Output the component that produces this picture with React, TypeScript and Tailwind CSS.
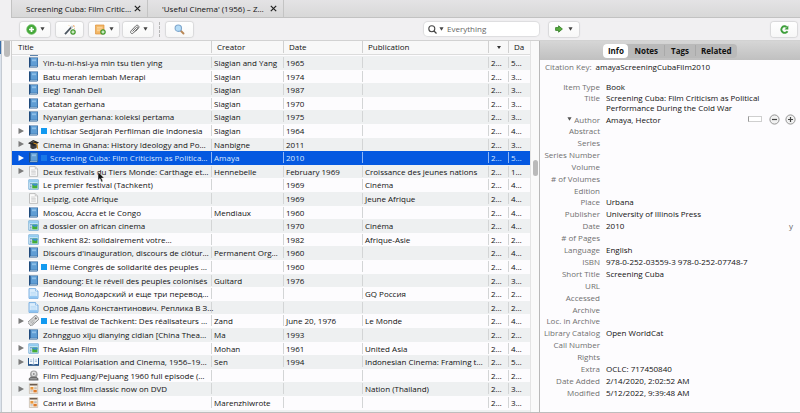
import React from 'react';

type Kind = 'book' | 'cap' | 'doc' | 'mag' | 'page' | 'clip' | 'open' | 'film' | 'news';

interface Item {
  kind: Kind;
  title: string;
  creator?: string;
  date?: string;
  pub?: string;
  a: string;
  b: string;
  parent?: boolean;
  tag?: boolean;
  selected?: boolean;
}

const items: Item[] = [
  { kind: 'book', title: 'Yin-tu-ni-hsi-ya min tsu tien ying', creator: 'Siagian and Yang', date: '1965', a: '2…', b: '5…' },
  { kind: 'book', title: 'Batu merah lembah Merapi', creator: 'Siagian', date: '1974', a: '2…', b: '3…' },
  { kind: 'book', title: 'Elegi Tanah Deli', creator: 'Siagian', date: '1987', a: '2…', b: '3…' },
  { kind: 'book', title: 'Catatan gerhana', creator: 'Siagian', date: '1970', a: '2…', b: '3…' },
  { kind: 'book', title: 'Nyanyian gerhana: koleksi pertama', creator: 'Siagian', date: '1975', a: '2…', b: '3…' },
  { kind: 'book', title: 'Ichtisar Sedjarah Perfilman die Indonesia', creator: 'Siagian', date: '1964', a: '2…', b: '4…', parent: true, tag: true },
  { kind: 'cap', title: 'Cinema in Ghana: History Ideology and Po…', creator: 'Nanbigne', date: '2011', a: '2…', b: '3…', parent: true },
  { kind: 'book', title: 'Screening Cuba: Film Criticism as Politica…', creator: 'Amaya', date: '2010', a: '2…', b: '5…', parent: true, tag: true, selected: true },
  { kind: 'doc', title: 'Deux festivals du Tiers Monde: Carthage et…', creator: 'Hennebelle', date: 'February 1969', pub: 'Croissance des jeunes nations', a: '2…', b: '1…', parent: true },
  { kind: 'mag', title: 'Le premier festival (Tachkent)', date: '1969', pub: 'Cinéma', a: '2…', b: '4…' },
  { kind: 'doc', title: 'Leipzig, coté Afrique', date: '1969', pub: 'Jeune Afrique', a: '2…', b: '4…' },
  { kind: 'book', title: 'Moscou, Accra et le Congo', creator: 'Mendiaux', date: '1960', a: '2…', b: '4…' },
  { kind: 'mag', title: 'a dossier on african cinema', date: '1970', pub: 'Cinéma', a: '2…', b: '4…' },
  { kind: 'mag', title: 'Tachkent 82: solidairement votre…', date: '1982', pub: 'Afrique-Asie', a: '2…', b: '2…' },
  { kind: 'book', title: "Discours d'inauguration, discours de clôtur…", creator: 'Permanent Org…', date: '1960', a: '2…', b: '4…' },
  { kind: 'book', title: 'IIème Congrès de solidarité des peuples …', date: '1960', a: '2…', b: '4…', tag: true },
  { kind: 'book', title: 'Bandoung: Et le réveil des peuples colonisés', creator: 'Guitard', date: '1976', a: '2…', b: '3…' },
  { kind: 'page', title: 'Леонид Володарский и еще три перевод…', pub: 'GQ Россия', a: '2…', b: '2…' },
  { kind: 'page', title: 'Орлов Даль Константинович. Реплика В З…', a: '2…', b: '2…' },
  { kind: 'clip', title: 'Le festival de Tachkent: Des réalisateurs …', creator: 'Zand', date: 'June 20, 1976', pub: 'Le Monde', a: '2…', b: '4…', parent: true, tag: true },
  { kind: 'book', title: 'Zohngguo xiju dianying cidian [China Thea…', creator: 'Ma', date: '1993', a: '2…', b: '2…' },
  { kind: 'mag', title: 'The Asian Film', creator: 'Mohan', date: '1961', pub: 'United Asia', a: '2…', b: '4…', parent: true },
  { kind: 'open', title: 'Political Polarisation and Cinema, 1956–19…', creator: 'Sen', date: '1994', pub: 'Indonesian Cinema: Framing t…', a: '2…', b: '5…', parent: true },
  { kind: 'film', title: 'Film Pedjuang/Pejuang 1960 full episode (…', a: '2…', b: '2…' },
  { kind: 'news', title: 'Long lost film classic now on DVD', pub: 'Nation (Thailand)', a: '2…', b: '3…', parent: true },
  { kind: 'news', title: 'Санти и Вина', creator: 'Marenzhiwrote', a: '2…', b: '3…' },
];

const fields: [string, string?][] = [
  ['Abstract'],
  ['Series'],
  ['Series Number'],
  ['Volume'],
  ['# of Volumes'],
  ['Edition'],
  ['Place', 'Urbana'],
  ['Publisher', 'University of Illinois Press'],
  ['Date', '2010'],
  ['# of Pages'],
  ['Language', 'English'],
  ['ISBN', '978-0-252-03559-3 978-0-252-07748-7'],
  ['Short Title', 'Screening Cuba'],
  ['URL'],
  ['Accessed'],
  ['Archive'],
  ['Loc. in Archive'],
  ['Library Catalog', 'Open WorldCat'],
  ['Call Number'],
  ['Rights'],
  ['Extra', 'OCLC: 717450840'],
  ['Date Added', '2/14/2020, 2:02:52 AM'],
  ['Modified', '5/12/2022, 9:39:48 AM'],
];

function ItemIcon({ kind }: { kind: Kind }) {
  return (
    <svg viewBox="0 0 11 11" className="h-[11px] w-[11px] shrink-0" aria-hidden="true">
      {kind === 'book' && (
        <>
          <path d="M1 .4h9v9.200l-.8 1H1z" fill="#2b5f96" />
          <path d="M2.600 1h6.800v7.800H2.600z" fill="#5f9dd4" />
          <path d="M1 .8l1.200-.4v9l-1.200 1z" fill="#1f4a7c" />
          <path d="M4 2.400h4v1.800H4z" fill="#8fc0e8" />
          <path d="M2.200 9.200h7v.7H2z" fill="#a9c4dc" />
        </>
      )}
      {kind === 'cap' && (
        <>
          <path d="M2.400 5.200v3.600c1.600 1.800 4.600 1.600 6.400-.2V5.400z" fill="#3d3d3d" />
          <path d="M0 4.200L5.200 1 11 3.600 6 7z" fill="#262626" />
          <path d="M1.600 4.300l3.700-2.200 1.600.6z" fill="#666" />
          <path d="M5.400 4l3.800 1.200.4 4.600" fill="none" stroke="#d9921c" strokeWidth="1" />
        </>
      )}
      {kind === 'doc' && (
        <>
          <path d="M1.500.6h5.700l2.400 2.400v7.400H1.500z" fill="#fafafa" stroke="#a9a9a9" strokeWidth=".7" />
          <path d="M7.200.6V3h2.400" fill="#ddd" stroke="#b5b5b5" strokeWidth=".5" />
          <path d="M3.200 4h4M3.200 5.400h4.600M3.200 6.800h4.600M3.200 8.200h4.600" stroke="#c4c4c4" strokeWidth=".7" />
        </>
      )}
      {kind === 'mag' && (
        <>
          <path d="M.8.800h9.500v9.500H.8z" fill="#e2f2fc" stroke="#5f9fce" strokeWidth=".8" />
          <path d="M1.200 1.200h8.700v2.200H1.200z" fill="#8fcaf0" />
          <path d="M2 4.600h2M2 6h1.600M2 7.600h1.600M2 9h1.600" stroke="#4f86b5" strokeWidth=".8" />
          <path d="M4.200 4.400h5.300v5H4.200z" fill="#43ad37" />
          <path d="M4.200 4.400h5.300v1.600l-2.200 1-3.100-1.200z" fill="#3d8fd0" />
        </>
      )}
      {kind === 'page' && (
        <>
          <path d="M1 .6h6.500L10 3v7.400H1z" fill="#dbedfc" stroke="#5f9fdc" strokeWidth=".8" />
          <path d="M7.500.6V3H10" fill="#fff" stroke="#5f9fdc" strokeWidth=".6" />
          <path d="M2.600 4.400h5.200M2.600 5.800h5.800M2.600 7.200h5.800" stroke="#b3d7f5" strokeWidth=".7" />
          <path d="M1.500 8.200h8v1.700h-8z" fill="#86bff0" />
        </>
      )}
      {kind === 'clip' && (
        <g transform="rotate(-42 5.500 5.500)">
          <path d="M0 3h10.800v5.200H0z" fill="#e6e6e6" stroke="#7d7d7d" strokeWidth=".8" />
          <path d="M1.400 4.600h5M1.400 5.800h6M1.400 7h4" stroke="#8d8d8d" strokeWidth=".6" />
          <path d="M7.600 4.400h2v2h-2z" fill="#777" />
        </g>
      )}
      {kind === 'open' && (
        <>
          <path d="M0 2h11v7.800H0z" fill="#1f4f86" />
          <path d="M1 1.600c1.600-.6 3.400-.4 4.500.6v6.400C4.200 7.800 2.600 7.800 1 8.200zM10 1.600c-1.600-.6-3.400-.4-4.500.6v6.400c1.300-.8 2.900-.8 4.500-.4z" fill="#f4f8fc" />
          <path d="M5.500 2.200v6.600M2 4h2.200M2 5.500h2.200M6.800 4H9M6.800 5.500H9" stroke="#7fa5cb" strokeWidth=".6" />
        </>
      )}
      {kind === 'film' && (
        <>
          <circle cx="5.800" cy="4.200" r="3.800" fill="#a3a3a3" />
          <circle cx="5.800" cy="3.800" r="2.300" fill="#e2e2e2" />
          <circle cx="5.800" cy="4" r=".9" fill="#888" />
          <path d="M.8 8.600l2-1.800h5.600l2 1.800v1.800H.8z" fill="#6a6a6a" />
          <path d="M2.200 8.800h6.600" stroke="#c4c4c4" strokeWidth=".7" />
        </>
      )}
      {kind === 'news' && (
        <>
          <path d="M1.400.700h8.300v9.800H1.400z" fill="#fbf2e6" stroke="#b7a795" strokeWidth=".6" />
          <path d="M1.800 1h7.500v1.500H1.800z" fill="#6b5c50" />
          <path d="M2.400 4h3v2.600h-3z" fill="#e8963b" />
          <path d="M6.200 4.300h2.600M6.200 5.500h2.600" stroke="#9b9b9b" strokeWidth=".6" />
          <path d="M5.400 6.800h3.400v2.600H5.400z" fill="#dd7b2c" />
          <path d="M2.400 7.600h2.400M2.400 8.800h2.400" stroke="#a5a5a5" strokeWidth=".6" />
        </>
      )}
    </svg>
  );
}

function Caret({ className = '' }: { className?: string }) {
  return (
    <svg viewBox="0 0 6 4" className={`h-1 w-[5px] shrink-0 ${className}`} aria-hidden="true">
      <path d="M.5 0h5L3 4z" fill="currentColor" />
    </svg>
  );
}

function ToolButton({ label, className = '', children }: { label: string; className?: string; children: React.ReactNode }) {
  return (
    <button
      type="button"
      aria-label={label}
      className={`flex h-[15px] items-center justify-center gap-[3px] rounded-[3px] bg-gradient-to-b from-white to-[#f7f7f7] text-[#444] shadow-[0_0_1px_1px_#d8d8da] ${className}`}
    >
      {children}
    </button>
  );
}

function Plus({ x, y }: { x: number; y: number }) {
  return (
    <g transform={`translate(${x} ${y})`}>
      <circle r="2.500" fill="#4faa35" stroke="#2e7d1e" strokeWidth=".5" />
      <path d="M-1.500 0h3M0-1.500v3" stroke="#fff" strokeWidth=".9" />
    </g>
  );
}

function Tab({ children }: { children: string }) {
  return (
    <div className="flex w-[136px] items-center justify-between border-r border-[#c4c4c4] pr-[6px] pl-[14px]">
      <span className="whitespace-nowrap">{children}</span>
      <button type="button" aria-label="Close tab">
        <svg viewBox="0 0 7 7" className="h-[7px] w-[7px]">
          <path d="M.8.800l5.400 5.400M6.200.800L.8 6.200" stroke="#222" strokeWidth="1.200" />
        </svg>
      </button>
    </div>
  );
}

function Cell({ children, selected }: { children?: React.ReactNode; selected?: boolean }) {
  return (
    <td className="p-0">
      <div className={`h-[11px] border-l pl-[2px] leading-[11px] whitespace-nowrap ${selected ? 'border-[#8fb6f5]' : 'border-[#d3d5d6]'}`}>
        {children}
      </div>
    </td>
  );
}

function HeadCell({ children }: { children: string }) {
  return (
    <th className="p-0 text-left font-medium">
      <button type="button" className="block h-[12px] w-full border-l border-[#d0d0d0] pl-[5px] text-left leading-[12px]">
        {children}
      </button>
    </th>
  );
}

function ItemTable() {
  return (
    <table className="w-full table-fixed border-collapse font-medium text-[#111]">
      <colgroup>
        <col />
        <col className="w-[72px]" />
        <col className="w-[79px]" />
        <col className="w-[126px]" />
        <col className="w-[20px]" />
        <col className="w-[22px]" />
      </colgroup>
      <thead>
        <tr className="h-[13px] bg-[#f8f8f8]">
          <th className="p-0 text-left font-medium">
            <button type="button" className="block pl-[6px] leading-[12px]">Title</button>
          </th>
          <HeadCell>Creator</HeadCell>
          <HeadCell>Date</HeadCell>
          <HeadCell>Publication</HeadCell>
          <th className="p-0">
            <button type="button" aria-label="Sort by attachments" className="flex h-[12px] w-full items-center justify-center border-l border-[#d0d0d0]">
              <svg viewBox="0 0 4 3" className="h-[3px] w-1"><path d="M0 0h4L2 3z" fill="#333" /></svg>
            </button>
          </th>
          <HeadCell>Da</HeadCell>
        </tr>
      </thead>
      <tbody className="[&>tr:nth-child(5n)]:h-[13px] [&>tr:nth-child(5n+3)]:h-[13px]">
        <tr aria-hidden="true">
          <td colSpan={6} className="border-t border-[#dcdcdc] bg-[#fdfcfe] p-0">
            <div className="ml-[18px] h-px w-[8px] bg-[#5d83ad]" />
          </td>
        </tr>
        {items.map((it, i) => (
          <tr
            key={it.title}
            aria-selected={!!it.selected}
            className={`h-[14px] ${it.selected ? 'bg-[#0458e0] text-[#dbe8ff]' : i % 2 ? 'bg-[#fdfcfe]' : 'bg-[#eef0f1]'}`}
          >
            <td className="p-0">
              <div className="flex h-[11px] items-center pl-[6px] leading-[11px] whitespace-nowrap">
                <span className="w-[10px] shrink-0">
                  {it.parent && (
                    <svg viewBox="0 0 6 6" className="h-[6px] w-[6px]" aria-hidden="true">
                      <path d="M.5 0v6L6 3z" fill={it.selected ? '#fff' : '#7b7b7b'} />
                    </svg>
                  )}
                </span>
                <ItemIcon kind={it.kind} />
                {it.tag && <span className={`ml-[2px] h-[6px] w-[6px] shrink-0 ${it.selected ? 'bg-[#1878e8]' : 'bg-[#139af0]'}`} />}
                <span className={it.tag ? 'ml-[3px]' : 'ml-1'}>{it.title}</span>
              </div>
            </td>
            <Cell selected={it.selected}>{it.creator}</Cell>
            <Cell selected={it.selected}>{it.date}</Cell>
            <Cell selected={it.selected}>{it.pub}</Cell>
            <Cell selected={it.selected}>{it.a}</Cell>
            <Cell selected={it.selected}>{it.b}</Cell>
          </tr>
        ))}
        <tr aria-hidden="true">
          <td colSpan={6} className="bg-[#eef0f1] p-0">
            <div className="ml-[18px] h-[3px] w-[8px] bg-[#c9645c]" />
          </td>
        </tr>
      </tbody>
    </table>
  );
}

function Field({ label, children }: { label: string; children?: React.ReactNode }) {
  return (
    <div className="flex h-[12px]">
      <dt className="w-[60px] shrink-0 text-right whitespace-nowrap text-[#707070]">{label}</dt>
      <dd className="ml-[6px] flex-1 font-medium">{children}</dd>
    </div>
  );
}

function RoundButton({ label, d }: { label: string; d: string }) {
  return (
    <button type="button" aria-label={label}>
      <svg viewBox="0 0 11 11" className="h-[11px] w-[11px]">
        <circle cx="5.500" cy="5.500" r="4.600" fill="#f1f1f1" stroke="#8a8a8a" strokeWidth=".9" />
        <path d={d} stroke="#444" strokeWidth="1.200" />
      </svg>
    </button>
  );
}

function InfoPane() {
  const tabs = ['Notes', 'Tags', 'Related'];
  return (
    <aside className="flex w-[261px] shrink-0 flex-col border-l border-[#b9b9b9] bg-[#fdfcfe]">
      <div className="flex h-[19px] items-center justify-center bg-gradient-to-b from-[#d6d6d6] to-[#c0c0c0]">
        <div className="flex h-[14px] items-center rounded-[4px] bg-[#bababa] font-bold text-[#111]">
          <button type="button" className="h-[14px] w-[25px] rounded-[4px] bg-white leading-[13px]">Info</button>
          {tabs.map((t) => (
            <button key={t} type="button" className="border-r border-[#a9a9a9] px-[6px] leading-[11px] last:border-r-0 last:px-[5px]">{t}</button>
          ))}
        </div>
      </div>
      <dl className="flex flex-col pt-px pr-1 leading-[11px] text-[#111] [&>div:nth-child(10n)]:h-[11px]">
        <div className="mb-[8px] flex gap-1 pl-[5px] leading-[12px]">
          <dt className="text-[#707070]">Citation Key:</dt>
          <dd className="font-medium">amayaScreeningCubaFilm2010</dd>
        </div>
        <Field label="Item Type">Book</Field>
        <div className="flex leading-[10px]">
          <dt className="w-[60px] shrink-0 text-right text-[#707070]">Title</dt>
          <dd className="ml-[6px] flex-1 font-medium">
            Screening Cuba: Film Criticism as Political<br />Performance During the Cold War
          </dd>
        </div>
        <div className="flex h-[12px] items-center">
          <dt className="flex w-[60px] shrink-0 items-center justify-end gap-[2px] text-[#707070]">
            <Caret className="text-[#555]" />Author
          </dt>
          <dd className="ml-[6px] flex flex-1 items-center font-medium">
            <span className="flex-1">Amaya, Hector</span>
            <button type="button" aria-label="Switch to single field" className="mr-[7px] h-[6px] w-[14px] border border-[#cfcfcf] border-l-[#999] bg-white" />
            <span className="flex gap-[5px]">
              <RoundButton label="Remove author" d="M3 5.500h5" />
              <RoundButton label="Add author" d="M3 5.500h5M5.500 3v5" />
            </span>
          </dd>
        </div>
        {fields.map(([label, value]) => (
          <Field key={label} label={label}>
            <span className="flex justify-between whitespace-nowrap">
              {value}
              {label === 'Date' && <span className="pr-[3px] font-normal text-[#666]">y</span>}
            </span>
          </Field>
        ))}
      </dl>
    </aside>
  );
}

export default function App() {
  return (
    <div className="relative flex h-screen flex-col overflow-hidden border-b border-[#bdbdbd] bg-[#f1f0f2] font-['Open_Sans','Noto_Sans',sans-serif] text-[8px] leading-[12px] text-[#111]">
      <div className="flex h-[18px] shrink-0 pl-[11px]">
        <div className="flex flex-1 border-b border-l border-[#c2c2c2] bg-gradient-to-b from-[#e4e3e5] to-[#d8d8d8] font-medium">
          <Tab>Screening Cuba: Film Critic…</Tab>
          <Tab>'Useful Cinema' (1956) – Z…</Tab>
        </div>
      </div>
      <div className="flex h-[22px] shrink-0 items-center pr-[3px] pl-[20px]">
        <div className="flex items-center gap-1">
          <ToolButton label="New item" className="w-[30px]">
            <svg viewBox="0 0 11 11" className="h-[11px] w-[11px]">
              <circle cx="5.500" cy="5.500" r="4.900" fill="#45a83a" stroke="#7fc776" strokeWidth=".6" />
              <path d="M3 5.500h5M5.500 3v5" stroke="#fff" strokeWidth="1.700" />
            </svg>
            <Caret />
          </ToolButton>
          <ToolButton label="Add by identifier" className="ml-[2px] w-[27px]">
            <svg viewBox="0 0 12 11" className="h-[11px] w-3">
              <path d="M1 10.200L8 2.500" stroke="#4b5560" strokeWidth="1.800" />
              <path d="M7 3.600l1.600-1.800" stroke="#cfd6dc" strokeWidth="1.800" />
              <path d="M8.800.500l.6 1 1-.5-.4 1.200 1.100.6-1.300.3" fill="#e8862c" />
              <path d="M5 1.500l.6.600M10.800 4.500l-.8-.4" stroke="#e8a33c" strokeWidth=".8" />
              <Plus x={9} y={8} />
            </svg>
          </ToolButton>
          <ToolButton label="New note" className="ml-[2px] w-[30px]">
            <svg viewBox="0 0 12 11" className="h-[11px] w-3">
              <path d="M1.500 1h8.500v7.500l-1.500 1.500h-7z" fill="#f3b765" stroke="#dd9440" strokeWidth=".7" />
              <path d="M3 3.300h5.500M3 5h5.500M3 6.700h3" stroke="#fbe0b4" strokeWidth=".8" />
              <Plus x={9} y={8} />
            </svg>
            <Caret />
          </ToolButton>
          <ToolButton label="Add attachment" className="w-[30px]">
            <svg viewBox="0 0 11 11" className="h-[11px] w-[11px]" fill="none">
              <path d="M3.500 7.500l4-4.200c1-1 2 .1 1.200 1L4.400 9c-1.600 1.600-3.800-.4-2.300-2.200L6.800 1.800c1.800-1.600 4.100.6 2.700 2.300L6.500 7.400" stroke="#666" strokeWidth="1" />
            </svg>
            <Caret />
          </ToolButton>
        </div>
        <div className="mx-[6px] h-[15px] border-l border-dashed border-[#b5b5b5]" />
        <ToolButton label="Advanced search" className="w-[27px]">
          <svg viewBox="0 0 11 11" className="h-[11px] w-[11px]">
            <path d="M6.500 6.500l3 3" stroke="#b98756" strokeWidth="1.900" strokeLinecap="round" />
            <circle cx="4.300" cy="4.200" r="3.200" fill="#b5dcf7" stroke="#7fa6cc" strokeWidth="1.100" />
          </svg>
        </ToolButton>
        <div className="flex flex-1 justify-end">
          <label className="flex h-[14px] w-[115px] items-center gap-[2px] rounded-[4px] bg-white px-[4px] text-[#444] shadow-[0_0_1px_1px_#dcdcde]">
            <svg viewBox="0 0 9 9" className="h-[9px] w-[9px] shrink-0" fill="none">
              <circle cx="3.800" cy="3.800" r="3" stroke="#444" strokeWidth="1.100" />
              <path d="M6 6l2.500 2.500" stroke="#444" strokeWidth="1.300" />
            </svg>
            <Caret />
            <input type="search" aria-label="Search" placeholder="Everything" className="ml-px min-w-0 flex-1 bg-transparent text-[8px] leading-[12px] outline-none placeholder:text-[#666]" />
          </label>
        </div>
        <div className="flex w-[258px] justify-between pl-[10px]">
          <ToolButton label="Locate" className="w-[30px]">
            <svg viewBox="0 0 8 8" className="h-2 w-2">
              <path d="M.6 2.600h3V.8L7.400 4 3.600 7.200V5.400h-3z" fill="#58ad3f" stroke="#2f7a22" strokeWidth=".8" />
            </svg>
            <Caret className="ml-[2px]" />
          </ToolButton>
          <ToolButton label="Sync" className="w-[26px]">
            <svg viewBox="0 0 9 9" className="h-[9px] w-[9px]" fill="none">
              <path d="M7.500 6.200A3.300 3.300 0 1 1 6.600 1.900" stroke="#3f9f3c" strokeWidth="1.900" />
              <path d="M8.300.500v4H4.500z" fill="#3f9f3c" />
            </svg>
          </ToolButton>
        </div>
      </div>
      <div className="flex min-h-0 flex-1 border-t border-[#d2d2d2]">
        <div className="flex w-[12px] shrink-0 border-r border-[#cfcfcf] bg-[#f7f7f8]">
          <div className="w-[2px] border-r border-[#c5cbd3] bg-[#dce3ec]">
            <div className="h-[13px] w-px bg-[#3c6fa8]" />
          </div>
          <div className="ml-[2px] h-[16px] w-[6px] rounded-b-[3px] bg-[#bcbcbc]" />
        </div>
        <main className="min-w-0 flex-1 overflow-hidden">
          <ItemTable />
        </main>
        <div className="w-[9px] shrink-0 border-l border-[#e4e4e4] bg-[#fafafa] pt-[119px] pl-[2px]">
          <div className="h-[16px] w-[5px] rounded-[3px] bg-[#bababa]" />
        </div>
        <InfoPane />
      </div>
      <svg viewBox="0 0 8 12" className="pointer-events-none absolute top-[171px] left-[97px] h-3 w-2" aria-hidden="true">
        <path d="M1 .8v8.600l2-1.800 1.400 3.400 1.500-.7-1.400-3.200h2.700z" fill="#111" stroke="#eee" strokeWidth=".5" />
      </svg>
    </div>
  );
}
